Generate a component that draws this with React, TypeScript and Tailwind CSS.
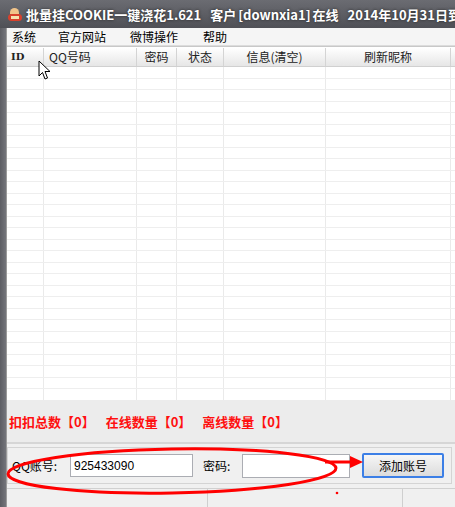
import React from 'react'

const columns = [
    { label: 'ID', width: 'w-[37px]', align: 'justify-start pl-[4px]' },
    { label: 'QQ号码', width: 'w-[93px]', align: 'justify-start pl-[5px]' },
    { label: '密码', width: 'w-[40px]', align: 'justify-center' },
    { label: '状态', width: 'w-[47px]', align: 'justify-center' },
    { label: '信息(清空)', width: 'w-[102px]', align: 'justify-center' },
    { label: '刷新昵称', width: 'w-[125px]', align: 'justify-center' },
]

const menus = ['系统', '官方网站', '微博操作', '帮助']

function GridRow() {
    return (
        <div className="flex h-[11.5px] shrink-0 border-b border-[#eeeeee]">
            {columns.map((c, i) => (
                <div key={i} className={`${c.width} shrink-0 border-r border-[#eaeaea]`} />
            ))}
        </div>
    )
}

export default function App() {
    return (
        <div className="relative w-[455px] h-[507px] overflow-hidden bg-[#f0f0f0] text-[12px] text-black font-['Noto_Sans_CJK_SC',sans-serif]">
            {/* title bar */}
            <div className="flex items-center h-[28px] bg-gradient-to-b from-[#6b6c72] to-[#4f5056] pl-[8px] overflow-hidden">
                <div className="relative w-[14px] h-[13px] shrink-0 mr-[4px]">
                    <div className="absolute left-[2px] top-0 w-[9px] h-[6px] rounded-t-full bg-[#f1c48a]" />
                    <div className="absolute left-0 top-[6px] w-[14px] h-[7px] bg-[#d8412c] rounded-sm" />
                    <div className="absolute left-[3px] top-[8px] w-[8px] h-[3px] bg-[#f5e2b0]" />
                </div>
                <div className="flex items-center whitespace-nowrap text-white font-bold text-[13px] leading-none [text-shadow:0_0_3px_#222] min-w-0">
                    <span>批量挂COOKIE一键浇花1.621</span>
                    <span className="ml-[9px]">客户</span>
                    <span className="ml-[2px]">[downxia1]</span>
                    <span className="ml-[2px]">在线</span>
                    <span className="ml-[9px]">2014年10月31日到期</span>
                </div>
            </div>

            <div className="flex h-[479px]">
                {/* left window frame */}
                <div className="w-[7px] shrink-0 bg-gradient-to-r from-[#5c5d63] to-[#74757b] border-r border-[#9a9a9a]" />

                <div className="flex flex-col flex-1 min-w-0">
                    {/* menu bar */}
                    <div className="flex items-center h-[18px] bg-[#f5f5f5] border-b border-[#dcdcdc] pl-[5px]">
                        {menus.map((m, i) => (
                            <span
                                key={m}
                                className={`text-[12px] leading-none ${i === 0 ? 'w-[46px]' : i === 1 ? 'w-[72px]' : i === 2 ? 'w-[73px]' : ''}`}
                            >
                                {m}
                            </span>
                        ))}
                    </div>

                    {/* grid */}
                    <div className="flex flex-col h-[354px] bg-white border-t border-[#c8c8c8] overflow-hidden pt-[1px]">
                        <div className="flex h-[19px] shrink-0 bg-gradient-to-b from-[#ffffff] to-[#e6e6e6] border-b border-[#d0d0d0]">
                            {columns.map((c, i) => (
                                <div
                                    key={i}
                                    className={`${c.width} shrink-0 flex items-center ${c.align} border-r border-[#d4d4d4] text-[12px] leading-none text-[#222]`}
                                >
                                    {i === 0 ? <span className="font-['DejaVu_Serif',serif] font-bold text-[10px]">ID</span> : c.label}
                                </div>
                            ))}
                        </div>
                        {Array.from({ length: 30 }).map((_, i) => (
                            <GridRow key={i} />
                        ))}
                    </div>

                    {/* counters */}
                    <div className="flex items-center gap-[11px] h-[42px] bg-[#ececec] pl-[2px] pt-[2px] text-[13px] font-bold text-[#ff1010] whitespace-nowrap">
                        <span>扣扣总数【0】</span>
                        <span>在线数量【0】</span>
                        <span>离线数量【0】</span>
                    </div>

                    {/* input panel */}
                    <div className="h-[46px] border-t-2 border-[#d6d6d6] bg-[#f0f0f0] pt-[3px] pr-[3px]">
                        <div className="flex items-center h-[37px] border border-[#d4d4d4] pl-[4px]">
                            <span className="w-[58px] text-[12px]">QQ账号:</span>
                            <div className="flex items-center w-[123px] h-[23px] bg-white border border-[#abadb3] pl-[3px] text-[12px] font-['Liberation_Sans',sans-serif]">
                                925433090
                            </div>
                            <span className="ml-[10px] w-[39px] text-[12px]">密码:</span>
                            <div className="w-[108px] h-[24px] bg-white border border-[#abadb3]" />
                            <button className="ml-[12px] w-[82px] h-[25px] rounded-[2px] border-2 border-[#3c7fe6] bg-gradient-to-b from-[#f6f6f6] to-[#dcdcdc] text-[12px]">
                                添加账号
                            </button>
                        </div>
                    </div>

                    {/* status bar */}
                    <div className="flex flex-1 border-t border-[#d0d0d0] bg-[#f0f0f0]">
                        <div className="w-[201px] border-r border-[#cfcfcf]" />
                        <div className="w-[195px] border-r border-[#cfcfcf]" />
                        <div className="flex-1" />
                    </div>
                </div>
            </div>

            {/* red markup drawn over screenshot */}
            <svg className="absolute left-0 top-0 pointer-events-none" width="455" height="507">
                <ellipse cx="172" cy="471" rx="164" ry="22" fill="none" stroke="#ff0000" strokeWidth="3" transform="rotate(-1 172 471)" />
                <line x1="325" y1="462" x2="352" y2="462" stroke="#ff0000" strokeWidth="3" />
                <polygon points="350,456 363,462 350,468" fill="#ff0000" />
                <circle cx="337" cy="493" r="1.3" fill="#ff0000" />
            </svg>

            {/* mouse cursor */}
            <svg className="absolute left-[38px] top-[60px] pointer-events-none" width="14" height="21" viewBox="0 0 14 21">
                <path d="M1 1 L1 16 L4.5 12.5 L7 19 L9.5 18 L7 11.5 L12 11.5 Z" fill="#ffffff" stroke="#000" strokeWidth="1" strokeLinejoin="round" />
            </svg>
        </div>
    )
}
